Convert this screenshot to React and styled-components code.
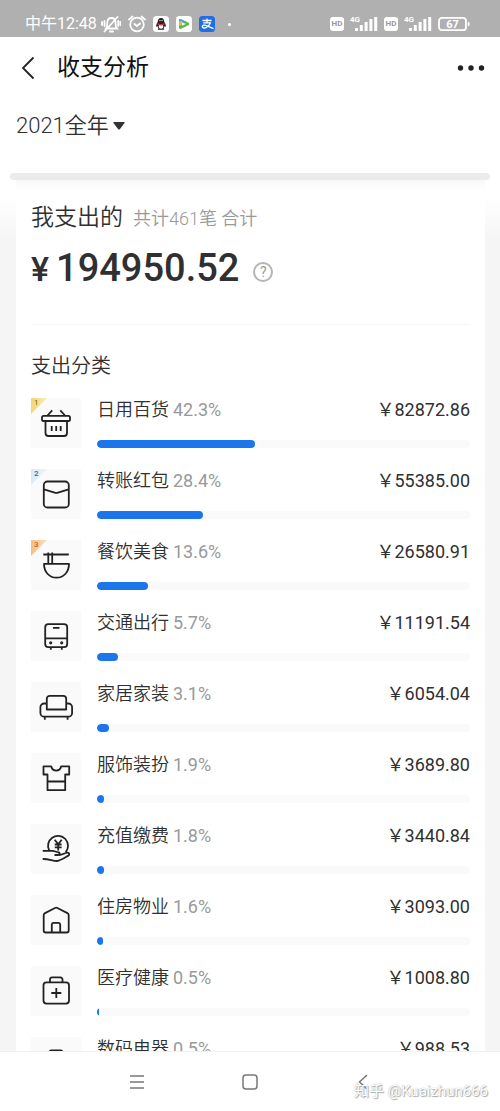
import React from "react";
import styled, { createGlobalStyle, ThemeProvider } from "styled-components";

const theme = {
  font: `Roboto, "Noto Sans CJK SC", sans-serif`,
  colors: {
    text: "#303030",
    title: "#111111",
    muted: "#999999",
    accent: "#1a76ea",
    page: "#f5f5f5",
    tile: "#fafafa",
    status: "#b0b0b0",
  },
};

const categories = [
  { name: "日用百货", percent: 42.3, amount: "82872.86", icon: "basket" },
  { name: "转账红包", percent: 28.4, amount: "55385.00", icon: "packet" },
  { name: "餐饮美食", percent: 13.6, amount: "26580.91", icon: "bowl" },
  { name: "交通出行", percent: 5.7, amount: "11191.54", icon: "bus" },
  { name: "家居家装", percent: 3.1, amount: "6054.04", icon: "sofa" },
  { name: "服饰装扮", percent: 1.9, amount: "3689.80", icon: "shirt" },
  { name: "充值缴费", percent: 1.8, amount: "3440.84", icon: "coin" },
  { name: "住房物业", percent: 1.6, amount: "3093.00", icon: "house" },
  { name: "医疗健康", percent: 0.5, amount: "1008.80", icon: "medkit" },
  { name: "数码电器", percent: 0.5, amount: "988.53", icon: "phone" },
];

const badges = [
  { from: "#f3d673", to: "#f8ebb8", color: "#a9742a" },
  { from: "#dbeaf8", to: "#eef3f8", color: "#44688f" },
  { from: "#f6bd84", to: "#fae0bd", color: "#c4622f" },
];

const icons = {
  basket: (
    <>
      <rect x="11" y="17.8" width="28" height="5.2" rx="1.6" />
      <path d="M14.5 23v12a3 3 0 0 0 3 3h15.5a3 3 0 0 0 3-3V23M16.5 17.5l4.7-5.2M34 17.5l-4.7-5.2M20.7 28v5M25.2 28v5M29.7 28v5" />
    </>
  ),
  packet: (
    <>
      <rect x="12.8" y="12.5" width="25" height="26" rx="3.6" />
      <path d="M13 20.3l10.6 3.3a5 5 0 0 0 3.4 0l10.6-3.3" />
    </>
  ),
  bowl: (
    <path d="M12.3 14.5h25.5M17.3 12.5v11M21.2 12.5v11M13 23.8h25c0 8-5 13.9-12.5 13.9S13 31.8 13 23.8z" />
  ),
  bus: (
    <>
      <rect x="14.2" y="13.2" width="22" height="23" rx="3.2" />
      <path d="M14.2 27.3h22M22 16.9h6.5M19.8 36.2v2.5M30.8 36.2v2.5" />
      <circle cx="19.7" cy="31.8" r="0.7" />
      <circle cx="30.7" cy="31.8" r="0.7" />
    </>
  ),
  sofa: (
    <path d="M15.8 27.5V16.8a3 3 0 0 1 3-3h13.4a3 3 0 0 1 3 3v10.7zM15.8 21.5h-2.6a3.8 3.8 0 0 0-3.8 3.8v5.6a3.8 3.8 0 0 0 3.8 3.8h24.1a3.8 3.8 0 0 0 3.8-3.8v-5.6a3.8 3.8 0 0 0-3.8-3.8h-2.1M13.8 34.7v3M36.6 34.7v3" />
  ),
  shirt: (
    <path d="M12.5 13.3h7.7c.6 2.7 2.6 4.3 5 4.3s4.4-1.6 5-4.3h8v8.2h-4v15.7H16.5V21.5h-4zM16.5 28.5h17.7" />
  ),
  coin: (
    <path d="M18.2 26.5a10 10 0 1 1 16.5 1.7M11.7 26.8h9.8c2.5 0 3.3 1.3 5.3 1.3 2.3 0 2.3 2.9 0 2.9h-3.3M28 31c3 .1 5.5-1.9 8.2-2.3 2.4-.3 2.7 2.2.8 3.2-3.5 1.9-7 4.5-11 5.1-4.7-.2-8.5-2.2-14.3-2M23.7 15.8l3.5 4.4 3.5-4.4M27.2 20.2v6.3M23.8 20.5h6.8M23.8 23.4h6.8" />
  ),
  house: (
    <path d="M12.7 20.2a2.3 2.3 0 0 1 1.3-2.1l10-5.1a2.6 2.6 0 0 1 2.4 0l10 5.1a2.3 2.3 0 0 1 1.3 2.1v15.3a2 2 0 0 1-2 2H14.7a2 2 0 0 1-2-2zM20.8 37.3v-7.5a2 2 0 0 1 2-2h4.4a2 2 0 0 1 2 2v7.5" />
  ),
  medkit: (
    <>
      <rect x="12.5" y="16.3" width="25.5" height="21.3" rx="3" />
      <path d="M19 16v-2.4a2.2 2.2 0 0 1 2.2-2.2h8.1a2.2 2.2 0 0 1 2.2 2.2V16M25.3 22v10M20.3 27h10" />
    </>
  ),
  phone: <rect x="18" y="13.5" width="14" height="25" rx="3" />,
};

const Signal = () => (
  <svg width="28" height="18" viewBox="0 0 28 18" fill="#fff" aria-hidden="true">
    <text x="0" y="7" fontSize="8" fontWeight="700">
      4G
    </text>
    {[3, 6, 9, 12, 14].map((h, i) => (
      <rect key={h} x={5 + i * 4.8} y={16 - h} width="3" height={h} rx="0.5" />
    ))}
  </svg>
);

const StatusIcons = () => (
  <>
    <svg width="20" height="18" viewBox="0 0 20 18" fill="none" stroke="#fff" strokeWidth="1.8" strokeLinecap="round">
      <path d="M5 13.5h11c-1.5-1.5-1.5-3-1.5-5.5 0-3-1.5-5-4-5s-4.2 2-4.2 5c0 2.5 0 4-1.3 5.5zM9 16.5h3M3.5 16.5L16.5 2M3.5 6v5M1 7v3M17.2 6v5M19.3 7v3" />
    </svg>
    <svg width="18" height="18" viewBox="0 0 18 18" fill="none" stroke="#fff" strokeWidth="1.8" strokeLinecap="round">
      <circle cx="9" cy="9.5" r="6.8" />
      <path d="M1 4.5L4.5 1.5M17 4.5L13.5 1.5M6.5 9l2.5 2 3-2.5" />
    </svg>
    <svg width="16" height="16" viewBox="0 0 16 16">
      <rect width="16" height="16" rx="3.5" fill="#fff" />
      <path d="M8 2c-2.3 0-3.3 1.7-3.3 4C3.7 7.3 3 9 3.2 10.5c.3.6.9 0 1.2-.5.2 1 .6 1.7 1.2 2.2-1.2.6-1 1.6.4 1.6h4c1.4 0 1.6-1 .4-1.6.6-.5 1-1.2 1.2-2.2.3.5.9 1.1 1.2.5C13 9 12.3 7.3 11.3 6c0-2.3-1-4-3.3-4z" fill="#222" />
      <ellipse cx="8" cy="10.5" rx="2.3" ry="2.3" fill="#fff" />
      <path d="M4.5 7c2 1.3 5 1.3 7 0v1.5c-2 1.2-5 1.2-7 0z" fill="#d6313c" />
      <circle cx="7" cy="4.6" r="0.7" fill="#fff" />
      <circle cx="9" cy="4.6" r="0.7" fill="#fff" />
    </svg>
    <svg width="16" height="16" viewBox="0 0 16 16">
      <rect width="16" height="16" rx="3.5" fill="#fff" />
      <path d="M3 4.5c0-1.2 1-1.7 2-1.2l7.5 3.5c1 .6 1 1.8 0 2.4L5 12.7C4 13.2 3 12.7 3 11.5z" fill="#59b94a" />
      <path d="M3 7V4.5c0-1.2 1-1.7 2-1.2l6 2.8z" fill="#3fa7e8" />
      <path d="M3 5v5l3-1V5z" fill="#f0b03c" />
      <path d="M6 6.2l4 1.8-4 1.8z" fill="#e8f7e0" />
    </svg>
    <svg width="16" height="16" viewBox="0 0 16 16">
      <rect width="16" height="16" rx="3.5" fill="#1f6fe0" />
      <path d="M3.5 4.5h9M8 2.5v4.3M4.3 6.9h7c-.8 2-2.2 3.6-4 4.6-1.3.7-3.8.9-4-.8-.1-1.6 2.4-1.9 4.2-1.1l7 3" fill="none" stroke="#fff" strokeWidth="1.3" />
    </svg>
  </>
);

const Battery = () => (
  <svg width="32" height="16" viewBox="0 0 32 16" aria-hidden="true">
    <rect x="1" y="1.8" width="27" height="12.4" rx="3" fill="none" stroke="#fff" strokeWidth="1.8" />
    <rect x="29.7" y="6" width="1.8" height="4" rx="0.9" fill="#fff" />
    <text x="14.5" y="12" textAnchor="middle" fontSize="11" fontWeight="700" fill="#fff">
      67
    </text>
  </svg>
);

const Category = ({ item, rank }) => (
  <Row>
    <Tile>
      <svg width="50" height="50" viewBox="0 0 50 50" aria-hidden="true">
        {icons[item.icon]}
      </svg>
      {badges[rank] && <Badge $look={badges[rank]}>{rank + 1}</Badge>}
    </Tile>
    <Details>
      <Line>
        <Name>{item.name}</Name>
        <Percent>{item.percent}%</Percent>
        <Amount>￥{item.amount}</Amount>
      </Line>
      <Track>
        <Fill style={{ width: `${item.percent}%` }} />
      </Track>
    </Details>
  </Row>
);

export default function App() {
  return (
    <ThemeProvider theme={theme}>
      <GlobalStyle />
      <Page>
        <StatusBar>
          <Clock>中午12:48</Clock>
          <StatusGroup>
            <StatusIcons />
            <Dot />
          </StatusGroup>
          <StatusRight>
            <HdTag>HD</HdTag>
            <Signal />
            <HdTag>HD</HdTag>
            <Signal />
            <Battery />
          </StatusRight>
        </StatusBar>

        <Header>
          <IconButton aria-label="返回">
            <svg width="14" height="24" viewBox="0 0 14 24" fill="none" stroke="#222" strokeWidth="1.8">
              <path d="M12.5 1.5L2 12l10.5 10.5" />
            </svg>
          </IconButton>
          <Title>收支分析</Title>
          <IconButton aria-label="更多">
            <svg width="28" height="8" viewBox="0 0 28 8" fill="#222">
              <circle cx="3.5" cy="4" r="2.7" />
              <circle cx="14" cy="4" r="2.7" />
              <circle cx="24.5" cy="4" r="2.7" />
            </svg>
          </IconButton>
        </Header>

        <Filter>
          <Period aria-label="时间范围" defaultValue="2021">
            <option value="2021">2021全年</option>
          </Period>
          <svg width="12" height="8" viewBox="0 0 12 8" fill="#333" aria-hidden="true">
            <path d="M1 0h10q1.3 0 .5 1L7 7q-1 1-2 0L.5 1Q-.3 0 1 0z" />
          </svg>
        </Filter>

        <Slot />
        <Content>
          <Card>
            <Summary>
              <SummaryHead>
                <SummaryTitle>我支出的</SummaryTitle>
                <SummaryNote>共计461笔 合计</SummaryNote>
              </SummaryHead>
              <Total>
                <Currency>¥</Currency>
                <TotalValue>194950.52</TotalValue>
                <Help aria-label="说明">?</Help>
              </Total>
            </Summary>
            <SectionTitle>支出分类</SectionTitle>
            <List>
              {categories.map((item, i) => (
                <Category key={item.name} item={item} rank={i} />
              ))}
            </List>
          </Card>
        </Content>

        <SystemNav>
          <NavButton aria-label="菜单">
            <svg width="16" height="16" viewBox="0 0 16 16">
              <path d="M1 2h14M1 8h14M1 14h14" />
            </svg>
          </NavButton>
          <NavButton aria-label="主页">
            <svg width="16" height="16" viewBox="0 0 16 16">
              <rect x="1" y="1" width="14" height="14" rx="3" />
            </svg>
          </NavButton>
          <NavButton aria-label="后退">
            <svg width="16" height="16" viewBox="0 0 16 16">
              <path d="M12 1L4.5 8l7.5 7" />
            </svg>
          </NavButton>
          <Watermark>知乎 @Kuaizhun666</Watermark>
        </SystemNav>
      </Page>
    </ThemeProvider>
  );
}

const GlobalStyle = createGlobalStyle`
  * {
    box-sizing: border-box;
  }
  body {
    margin: 0;
    background: #fff;
    color: ${({ theme }) => theme.colors.text};
    font-family: ${({ theme }) => theme.font};
    font-weight: 350;
  }
  button, select {
    padding: 0;
    border: 0;
    background: none;
    color: inherit;
    font-family: inherit;
    font-weight: inherit;
  }
  svg {
    display: block;
    flex-shrink: 0;
  }
`;

const Page = styled.div`
  height: 100vh;
  display: flex;
  flex-direction: column;
  overflow: hidden;
`;

const StatusBar = styled.div`
  flex: none;
  display: flex;
  align-items: center;
  padding: 11px 30px 0 25px;
  height: 37px;
  color: #fff;
  background: ${({ theme }) => theme.colors.status};
`;
const Clock = styled.span`
  font-size: 16px;
  font-weight: 400;
  line-height: 24px;
`;
const StatusGroup = styled.div`
  display: flex;
  align-items: center;
  gap: 7px;
  margin-left: 4px;
`;
const Dot = styled.span`
  width: 3px;
  height: 3px;
  margin-left: 6px;
  border-radius: 50%;
  background: #fff;
`;
const StatusRight = styled(StatusGroup)`
  margin-left: auto;
  gap: 6px;
`;
const HdTag = styled.span`
  width: 14px;
  border-radius: 3px;
  background: #fff;
  color: #999;
  font-size: 8px;
  font-weight: 700;
  line-height: 14px;
  text-align: center;
`;

const Header = styled.header`
  flex: none;
  display: flex;
  align-items: center;
  height: 60px;
  padding: 2px 15px 0 21px;
`;
const IconButton = styled.button`
  display: flex;
  align-items: center;
  height: 40px;
`;
const Title = styled.h1`
  flex: 1;
  margin: 0 0 0 22px;
  color: ${({ theme }) => theme.colors.title};
  font-size: 23px;
  font-weight: 400;
  line-height: 32px;
`;

const Filter = styled.div`
  flex: none;
  display: flex;
  align-items: center;
  gap: 4px;
  height: 56px;
  padding: 2px 16px 0;
`;
const Period = styled.select`
  appearance: none;
  font-size: 22px;
  line-height: 32px;
`;

const Slot = styled.div`
  flex: none;
  height: 7px;
  margin: 20px 10px 0;
  border-radius: 4px;
  background: #ebebeb;
`;
const Content = styled.main`
  flex: 1;
  min-height: 0;
  overflow: hidden;
  background: linear-gradient(#fff 16px, ${({ theme }) => theme.colors.page} 60px);
`;
const Card = styled.section`
  margin: 0 15px 0 16px;
  padding: 0 15px;
  background: linear-gradient(#f8f8f8, #fff 10px);
`;
const Summary = styled.div`
  padding: 22px 0 32px;
  border-bottom: 1px solid #f7f7f7;
`;
const SummaryHead = styled.div`
  display: flex;
  align-items: baseline;
  gap: 10px;
  height: 32px;
  line-height: 32px;
`;
const SummaryTitle = styled.h2`
  margin: 0;
  font-size: 23px;
  font-weight: inherit;
`;
const SummaryNote = styled.span`
  color: ${({ theme }) => theme.colors.muted};
  font-size: 18px;
`;
const Total = styled.div`
  display: flex;
  align-items: baseline;
  height: 48px;
  margin-top: 10px;
  font-weight: 500;
  line-height: 48px;
`;
const Currency = styled.span`
  margin-right: 7px;
  font-size: 34px;
`;
const TotalValue = styled.span`
  font-size: 38px;
`;
const Help = styled.button`
  align-self: center;
  width: 20px;
  height: 20px;
  margin: 8px 0 0 14px;
  border: 2px solid #b5b5b5;
  border-radius: 50%;
  color: #999;
  font-size: 14px;
  font-weight: 400;
  line-height: 16px;
`;

const SectionTitle = styled.h3`
  margin: 0;
  padding-top: 26px;
  font-size: 20px;
  font-weight: inherit;
  line-height: 30px;
`;
const List = styled.ul`
  margin: 0;
  padding: 17px 0 0;
  list-style: none;
`;
const Row = styled.li`
  display: flex;
  gap: 16px;
  height: 71px;
`;
const Tile = styled.div`
  position: relative;
  flex: none;
  width: 50px;
  height: 50px;
  background: ${({ theme }) => theme.colors.tile};

  svg {
    fill: none;
    stroke: #222;
    stroke-width: 1.8;
    stroke-linejoin: round;
  }
`;
const Badge = styled.span`
  position: absolute;
  top: 0;
  left: 0;
  width: 16px;
  height: 16px;
  padding-left: 3px;
  clip-path: polygon(0 0, 100% 0, 0 100%);
  background: linear-gradient(to right, ${({ $look }) => $look.from}, ${({ $look }) => $look.to});
  color: ${({ $look }) => $look.color};
  font-size: 8px;
  font-weight: 500;
  line-height: 10px;
`;
const Details = styled.div`
  flex: 1;
`;
const Line = styled.div`
  display: flex;
  align-items: baseline;
  height: 24px;
  font-size: 18px;
  line-height: 24px;
`;
const Name = styled.span``;
const Percent = styled.span`
  margin-left: 4px;
  color: ${({ theme }) => theme.colors.muted};
  font-weight: 400;
`;
const Amount = styled.span`
  margin-left: auto;
  font-weight: 400;
`;
const Track = styled.div`
  height: 8px;
  margin-top: 18px;
  border-radius: 4px;
  overflow: hidden;
  background: #fafafa;
`;
const Fill = styled.div`
  height: 100%;
  border-radius: 4px;
  background: ${({ theme }) => theme.colors.accent};
`;

const SystemNav = styled.nav`
  position: relative;
  flex: none;
  display: grid;
  grid-template-columns: repeat(3, 1fr);
  height: 60px;
  padding: 0 80px;
  border-top: 1px solid #f0f0f0;
  background: #fff;
`;
const NavButton = styled.button`
  display: flex;
  align-items: center;
  justify-content: center;

  svg {
    fill: none;
    stroke: #777;
    stroke-width: 1.5;
  }
`;
const Watermark = styled.span`
  position: absolute;
  right: 12px;
  bottom: 8px;
  color: #fff;
  font-size: 15px;
  font-weight: 400;
  line-height: 24px;
  text-shadow: 0 0 1px #999, 1px 1px 1px #aaa;
`;
